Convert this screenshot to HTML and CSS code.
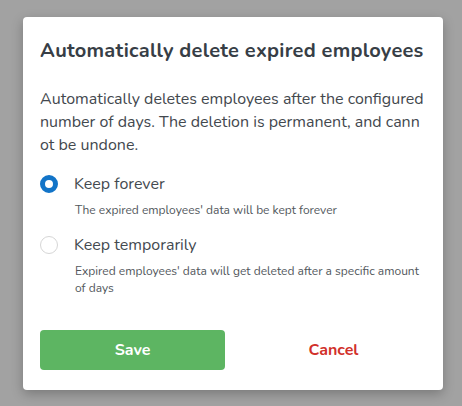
FILE: index.html
```html
<!DOCTYPE html>
<html>
<head>
<meta charset="utf-8">
<link rel="stylesheet" href="styles.css">
</head>
<body>
<div class="dialog">
  <h2 class="title">Automatically delete expired employees</h2>
  <p class="desc">Automatically deletes employees after the configured number of days. The deletion is permanent, and cannot be undone.</p>
  <div class="options">
    <div class="option">
      <div class="row">
        <span class="radio checked"></span>
        <span class="label">Keep forever</span>
      </div>
      <div class="hint">The expired employees' data will be kept forever</div>
    </div>
    <div class="option">
      <div class="row">
        <span class="radio"></span>
        <span class="label">Keep temporarily</span>
      </div>
      <div class="hint">Expired employees' data will get deleted after a specific amount of days</div>
    </div>
  </div>
  <div class="actions">
    <button class="btn save">Save</button>
    <button class="btn cancel">Cancel</button>
  </div>
</div>
</body>
</html>
```
FILE: styles.css
```css
html, body {
  margin: 0;
  padding: 0;
  background: #a2a2a2;
  height: 100%;
}
body {
  font-family: "Nunito", "Open Sans", sans-serif;
  padding: 17px 19px 0 23px;
}
.dialog {
  width: 420px;
  height: 373px;
  box-sizing: border-box;
  background: #fff;
  border-radius: 4px;
  box-shadow: 0 4px 12px rgba(0,0,0,0.25);
  padding: 21px 17px 20px 17px;
  display: flex;
  flex-direction: column;
}
.title {
  margin: 0;
  font-size: 20px;
  letter-spacing: 0.25px;
  font-weight: 700;
  color: #373e46;
  line-height: 26px;
}
.desc {
  margin: 24px 0 0 0;
  font-size: 16px;
  line-height: 23px;
  color: #43484e;
  word-break: break-all;
}
.options {
  margin-top: 15px;
  display: flex;
  flex-direction: column;
  gap: 14px;
}
.row {
  display: flex;
  align-items: center;
  gap: 16px;
  height: 24px;
}
.radio {
  width: 18px;
  height: 18px;
  box-sizing: border-box;
  border-radius: 50%;
  border: 1px solid #d6d6d6;
  background: #fff;
}
.radio.checked {
  border: 5px solid #1274c8;
}
.label {
  font-size: 16px;
  color: #444a50;
}
.hint {
  margin: 6px 0 0 35px;
  font-size: 12px;
  line-height: 17px;
  color: #52575c;
}
.actions {
  margin-top: auto;
  display: flex;
  gap: 16px;
}
.btn {
  flex: 1;
  height: 40px;
  border: none;
  border-radius: 4px;
  font-family: inherit;
  font-size: 16px;
  font-weight: 700;
  background: transparent;
}
.save {
  background: #5db562;
  color: #fff;
}
.cancel {
  color: #d1302a;
}
```
